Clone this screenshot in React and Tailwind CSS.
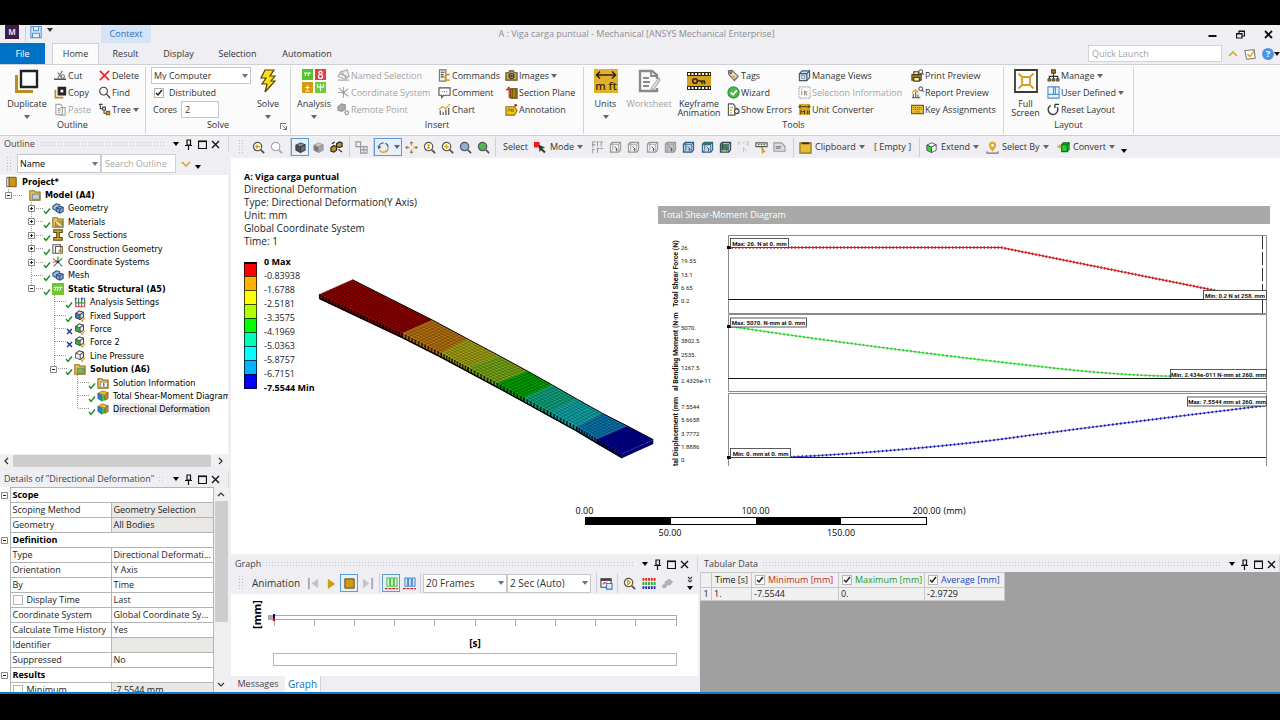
import { useState } from "react";
import clsx from "clsx";

const BANDS = ["#8e0000", "#b5720f", "#a3a312", "#78a818", "#00a000", "#0fa27c", "#10a3a3", "#0b74ab", "#00008c"];
const LEGEND = [
    ["bg-[#ff0000]", "-0.83938"],
    ["bg-[#ffb200]", "-1.6788"],
    ["bg-[#ffff00]", "-2.5181"],
    ["bg-[#b2ff00]", "-3.3575"],
    ["bg-[#00ff00]", "-4.1969"],
    ["bg-[#00ffb2]", "-5.0363"],
    ["bg-[#00ffff]", "-5.8757"],
    ["bg-[#00b2ff]", "-6.7151"],
    ["bg-[#0000ff]", "-7.5544 Min"],
];

/* ---------- small shared pieces ---------- */

function Svg({ size = "w-[13px] h-[13px]", box = "0 0 14 14", children }) {
    return (
        <svg viewBox={box} className={clsx("shrink-0", size)} fill="none" stroke="#444" strokeWidth="1.2">
            {children}
        </svg>
    );
}

function Arrow({ className = "text-gray-500" }) {
    return (
        <svg viewBox="0 0 6 4" className={clsx("w-[6px] h-[4px] shrink-0", className)}>
            <path d="M0 0h6L3 4z" fill="currentColor" />
        </svg>
    );
}

function Sep() {
    return <span className="w-px h-5 bg-[#cfcfd6] shrink-0" />;
}

function Grip() {
    return <span className="w-[6px] h-4 shrink-0 bg-[radial-gradient(#bcbcc2_1px,transparent_1px)] bg-[size:3px_3px]" />;
}

function Tick({ label, checked, className }) {
    const [on, setOn] = useState(checked);
    return (
        <label className={clsx("flex items-center whitespace-nowrap", className)}>
            <span className="relative flex shrink-0">
                <input
                    type="checkbox"
                    checked={on}
                    onChange={(e) => setOn(e.target.checked)}
                    className="appearance-none w-[10px] h-[10px] border border-[#b5b5b5] bg-white"
                />
                {on && (
                    <svg viewBox="0 0 10 10" className="absolute inset-0 w-[10px] h-[10px] pointer-events-none" fill="none" stroke="#222" strokeWidth="1.5">
                        <path d="M2 5l2 2 4-5" />
                    </svg>
                )}
            </span>
            {label}
        </label>
    );
}

function Picker({ label, options, className }) {
    return (
        <div className={clsx("relative shrink-0", className)}>
            <select aria-label={label} className="appearance-none w-full h-full border border-[#c6c6cc] bg-white pl-[2px] pr-3 leading-none">
                {options.map((o) => (
                    <option key={o}>{o}</option>
                ))}
            </select>
            <span className="absolute right-[3px] inset-y-0 flex items-center pointer-events-none">
                <Arrow />
            </span>
        </div>
    );
}

function PanelHeader({ title, edge = "pr-[6px]" }) {
    return (
        <div className={clsx("flex items-center h-4 shrink-0 pl-[4px] text-[#444] border-r border-[#d5d5da]", edge)}>
            <h2 className="whitespace-nowrap">{title}</h2>
            <span className="flex-1 h-[7px] mx-1 bg-[radial-gradient(#c4c4ca_1px,transparent_1px)] bg-[size:3px_3px]" />
            <button aria-label="Menu" className="w-[13px] flex justify-center"><Arrow className="text-black" /></button>
            <button aria-label="Pin" className="w-[13px] flex justify-center">
                <Svg size="w-[9px] h-[11px]" box="0 0 9 11"><path d="M3 1h3.500v5H3zM1 6.500h7M4.500 6.500V11" stroke="#111" /></Svg>
            </button>
            <button aria-label="Maximize" className="w-[14px] flex justify-center">
                <Svg size="w-[9px] h-[9px]" box="0 0 9 9"><path d="M.5 1h8v7.500h-8z" stroke="#111" /><path d="M0 1.500h9" stroke="#111" /></Svg>
            </button>
            <button aria-label="Close" className="w-[13px] flex justify-center">
                <Svg size="w-[9px] h-[9px]" box="0 0 9 9"><path d="M1 1l7 7M8 1L1 8" stroke="#111" strokeWidth="1.400" /></Svg>
            </button>
        </div>
    );
}

/* ---------- icons ---------- */

function Cube({ top = "#fff", left = "#fff", right = "#fff", stroke = "#444" }) {
    return (
        <Svg>
            <path d="M2 4.500L7 2l5 2-5 2.500z" fill={top} stroke={stroke} strokeWidth=".9" />
            <path d="M2 4.500l5 2v6l-5-2.500z" fill={left} stroke={stroke} strokeWidth=".9" />
            <path d="M12 4L7 6.500v6l5-2.500z" fill={right} stroke={stroke} strokeWidth=".9" />
        </Svg>
    );
}

function Mag({ fill = "#fff", stroke = "#555", mark }) {
    return (
        <Svg>
            <circle cx="6" cy="6" r="4.500" fill={fill} stroke={stroke} strokeWidth="1.300" />
            <path d="M9.500 9.500l3.500 3.500" stroke={stroke} strokeWidth="2" />
            {mark && <path d={mark} stroke="#d9a400" strokeWidth="1.400" />}
        </Svg>
    );
}

function SelBox({ fill = "#f4f4f4", stroke = "#999", cap }) {
    return (
        <Svg>
            <path d="M1.500 3.500l2-2h9v8l-2 2.500h-9z" fill={fill} stroke={stroke} />
            {cap && <path d={cap} fill="#2f8f3a" stroke="none" />}
            <path d="M1.500 3.500h9V12M10.500 3.500l2-2M4 1.500v8L1.500 12" stroke={stroke} strokeWidth=".9" />
            <path d="M6 6l3 3-1.500.2 1 2" stroke="#555" strokeWidth="1" />
        </Svg>
    );
}

const I = {
    cut: <Svg><path d="M0 11h13" strokeWidth="1.500" /><path d="M4 10l5-8M8 9L4 4" stroke="#777" /><circle cx="9.500" cy="8" r="1.800" stroke="#777" /></Svg>,
    copy: <Svg><path d="M4.500 1.500h8v8h-8z" fill="#222" stroke="#222" /><path d="M7 4h3v3H7z" fill="#fff" stroke="none" /><path d="M1.500 4v8.500H10" stroke="#b8901c" strokeWidth="1.800" /></Svg>,
    paste: <Svg><path d="M2 1.500h5l2 2v9H2zM7 5h5v8H6" stroke="#a6a6a6" /><path d="M4 6h3M4 8h3M4 10h3" stroke="#a6a6a6" /></Svg>,
    del: <Svg><path d="M2 2l10 10M12 2L2 12" stroke="#e3262b" strokeWidth="1.700" /></Svg>,
    find: <Svg><circle cx="6" cy="5.500" r="4.200" stroke="#444" /><path d="M9 8.500l4 4.500" stroke="#444" strokeWidth="1.500" /></Svg>,
    tree: <Svg><path d="M1 1.500h4M2.500 1.500v4.500h4M6.500 6v5h3" stroke="#444" /><path d="M5 4.500h3v3H5z" fill="#fff" /><path d="M9 9h3.500v3.500H9z" fill="#c9a227" stroke="#7c6413" /></Svg>,
    named: <Svg><path d="M1 8l3-5 7-2 2 7-4 3z" stroke="#aaa" fill="#eee" /><path d="M3 5l8 3M5 3l5 7M1 12h12" stroke="#aaa" /></Svg>,
    coord: <Svg><path d="M7 7L2 2M7 7l5-4M7 7v6M7 7H1M7 7l5 4M7 7V1" stroke="#aaa" /><circle cx="7" cy="7" r="1.500" fill="#999" stroke="none" /></Svg>,
    remote: <Svg><path d="M1 4l4-3 4 1v5L5 9 1 8z" fill="#aaa" stroke="#999" /><circle cx="10.500" cy="10.500" r="2" stroke="#999" /></Svg>,
    commands: <Svg><path d="M1.500 1h7v12h-7z" fill="#eee" stroke="#777" /><path d="M3 3.500h4M3 6h3M3 8.500h3" stroke="#444" /><path d="M12.500 6.500a3 3 0 1 0 0 5" stroke="#d39e00" strokeWidth="1.800" /></Svg>,
    comment: <Svg><path d="M1 2h12v8H6l-2 2.500V10H1z" fill="#fff" stroke="#555" /><path d="M4 6h1M6.500 6h1M9 6h1" stroke="#777" /></Svg>,
    chart: <Svg><path d="M2.500 8v5M5.500 10v3M8.500 7v6M11.500 5v8" stroke="#666" strokeWidth="1.500" /><path d="M1 7l4-3 3 2 5-5" stroke="#d9a400" /></Svg>,
    images: <Svg><path d="M1 4h3l1-2h4l1 2h3v8H1z" fill="#c7a94c" stroke="#5c4d1c" /><circle cx="7" cy="7.500" r="2.600" fill="#fff" stroke="#222" /><circle cx="7" cy="7.500" r="1" fill="#222" /></Svg>,
    section: <Svg><path d="M6 3h7v10H6z" fill="#b88a14" stroke="#5d4507" /><path d="M8 3v10M11 3v10" stroke="#5d4507" strokeWidth=".8" /><path d="M4.500 1v12M1 4h6M4.500 1L2.500 3" stroke="#e02020" strokeWidth="1.300" /></Svg>,
    annotation: <Svg><path d="M1 4h9l3 4-3 5H1z" fill="#f0c51c" stroke="#8d7306" /><path d="M3 9l1.500-3L6 9M7 6v3h2V7H7" stroke="#6b5806" strokeWidth=".8" /><circle cx="11.500" cy="2.500" r="1.500" fill="#e02020" stroke="none" /></Svg>,
    tags: <Svg><path d="M1.500 2l4-.5L12 8l-4 4.500L2 6z" fill="#e9dfbf" stroke="#666" /><circle cx="4" cy="4" r="1" fill="#fff" stroke="#555" /><path d="M6 7l3 3" stroke="#b5942c" /></Svg>,
    wizard: <Svg><circle cx="7" cy="7" r="6" fill="#4fb84a" stroke="#2c8f35" /><path d="M4 7l2.500 2.500L10.500 4.500" stroke="#fff" strokeWidth="1.800" /></Svg>,
    errors: <Svg><path d="M1.500 1h5l2 2v10h-7z" fill="#fff" stroke="#555" /><path d="M3.500 5h3M3.500 8h2M3.500 10.500h2" stroke="#d9a400" /><circle cx="10.500" cy="9" r="2.500" fill="#eee" stroke="#444" /><path d="M9 5l3 1.500" /></Svg>,
    views: <Svg><path d="M1.500 5l3-3h8v7l-3 3.500h-8z" fill="#cfe2f5" stroke="#456" /><path d="M1.500 5h8v7.500M9.500 5l3-3" stroke="#456" /><path d="M4 7h3v3H4z" fill="#fff" stroke="#678" strokeWidth=".8" /></Svg>,
    info: <Svg><path d="M1 1h12v12H1z" stroke="#aaa" strokeDasharray="2 1" /><path d="M4 5v5M4 3v1M7 10V6l3 4M10 6H8" stroke="#999" /></Svg>,
    converter: <Svg><path d="M1 1h12v12H1z" fill="#e0aa24" stroke="none" /><path d="M1 4h12M3 2L1 4l2 2M11 2l2 2-2 2M3 12V8l2 2 2-2v4M10 12V8M12 12V8" stroke="#3a2d05" strokeWidth="1" /></Svg>,
    print: <Svg><path d="M1 6h10v6H1z" fill="#b59432" stroke="#4b3d0f" /><path d="M3 3h5v3H3zM3 9h6v4H3z" fill="#f8eec5" stroke="#4b3d0f" /><circle cx="10.500" cy="3" r="2" stroke="#667" fill="#fff" /><path d="M12 4.500l1.500 1.500" /></Svg>,
    report: <Svg><path d="M1 12.500h9M2.500 8v4M5 6v6M7.500 9v3" stroke="#666" strokeWidth="1.300" /><path d="M1 7l4-3 3 3" stroke="#e09a20" /><circle cx="10.500" cy="3" r="2" stroke="#667" fill="#fff" /><path d="M12 4.500l1.500 1.500" /></Svg>,
    keys: <Svg><path d="M.5 2.500h13v9H.5z" fill="#eec436" stroke="#7e6205" strokeWidth="1.400" /><path d="M2.500 5h9M2.500 7h9M4 9.500h6" stroke="#8d7110" strokeDasharray="1.200 .8" /></Svg>,
    manage: <Svg><path d="M7 4v4M2.500 11V8h9v3M7 8v3" stroke="#333" /><path d="M5 1h4v3.500H5z" fill="#a5811c" stroke="#5d4507" /><path d="M1 10.500h3V13H1zM5.500 10.500h3V13h-3zM10 10.500h3V13h-3z" fill="#a5811c" stroke="#333" strokeWidth=".8" /></Svg>,
    user: <Svg><path d="M1 1h12v12H1zM7 1v8M1 9h12M9 9V1" fill="#eaf3fc" stroke="#4c90cf" /></Svg>,
    reset: <Svg><path d="M4 2.500A5.200 5.200 0 1 0 11 4.500" strokeWidth="1.600" /><path d="M8.500 1.500H13M8.500 1.500v4" stroke="#333" strokeWidth="1.400" /></Svg>,
};

const Big = {
    duplicate: <Svg size="w-6 h-6" box="0 0 24 24"><path d="M1.500 6v16.500H18" stroke="#b8901c" strokeWidth="3" /><path d="M6 2h16v16H6z" fill="#fff" stroke="#222" strokeWidth="2.400" /></Svg>,
    solve: <Svg size="w-6 h-6" box="0 0 24 24"><path d="M9 1h9l-4 6h5l-4 5h4L9 23l2-8H6l4-6H5z" fill="#ffdd11" stroke="#4e4508" /></Svg>,
    analysis: (
        <Svg size="w-6 h-6" box="0 0 24 24">
            <path d="M0 0h11v11H0z" fill="#55c52c" stroke="none" /><path d="M13 0h11v11H13z" fill="#e04143" stroke="none" />
            <path d="M0 13h11v11H0z" fill="#d49b12" stroke="none" /><path d="M13 13h11v11H13z" fill="#69cf35" stroke="none" />
            <path d="M2 4h7M3 7l1-3M6 7l1-3M3.500 18.500h4M5.500 16.500v4M3.500 22h4M15.500 15v3h6v-3M18.500 15v7" stroke="#fff" />
            <circle cx="18.500" cy="3.700" r="1.600" stroke="#fff" /><circle cx="18.500" cy="7.500" r="2" stroke="#fff" />
        </Svg>
    ),
    units: (
        <Svg size="w-6 h-6" box="0 0 24 24">
            <path d="M0 0h24v24H0z" fill="#e2b02c" stroke="none" />
            <path d="M3 6h18M6 2.500L2.500 6 6 9.500M18 2.500L21.500 6 18 9.500" stroke="#2b2410" strokeWidth="1.600" />
            <text x="12" y="21" textAnchor="middle" fontSize="11" fontWeight="600" fill="#3a2d05" stroke="none">m ft</text>
        </Svg>
    ),
    worksheet: <Svg size="w-6 h-6" box="0 0 24 24"><path d="M20 10V6l-5-4H3v20h17v-3" stroke="#8a8a8a" strokeWidth="2.400" /><path d="M14 2v5h6M6 9h6M6 13h7M6 17h6" stroke="#8a8a8a" strokeWidth="1.800" /><path d="M22 9l-7 9-1 3 3-1 6-9z" fill="#eee" stroke="#aaa" /></Svg>,
    keyframe: (
        <Svg size="w-6 h-6" box="0 0 24 24">
            <path d="M0 3h24v18H0z" fill="#2e2710" stroke="none" /><path d="M0 7h24v10H0z" fill="#d6a11d" stroke="none" />
            <path d="M1 5h22M1 19h22" stroke="#fff" strokeWidth="1.800" strokeDasharray="2 1.500" />
            <circle cx="8" cy="12" r="2.300" stroke="#2e2710" strokeWidth="1.600" /><path d="M10 12h8M15 12v3M17.500 12v3" stroke="#2e2710" strokeWidth="1.600" />
        </Svg>
    ),
    full: <Svg size="w-6 h-6" box="0 0 24 24"><path d="M1 1h22v22H1z" fill="#fff" stroke="#3a3a3a" strokeWidth="1.800" /><path d="M8 8h8v8H8zM8 8L4.500 4.500M16 8l3.500-3.500M8 16l-3.500 3.500M16 16l3.500 3.500" stroke="#d9a11a" strokeWidth="1.800" /></Svg>,
};

/* ---------- ribbon ---------- */

function Cmd({ icon, label, off, arrow }) {
    return (
        <button disabled={off} className={clsx("flex items-center h-[17px] gap-px whitespace-nowrap", off ? "text-[#a3a3a3]" : "text-[#333]")}>
            {icon}
            <span>{label}</span>
            {arrow && <Arrow className="ml-px text-[#666]" />}
        </button>
    );
}

function BigCmd({ icon, label, second, off, arrow, width }) {
    return (
        <button disabled={off} className={clsx("flex flex-col items-center pt-[2px] shrink-0 leading-[9px] whitespace-nowrap", width, off ? "text-[#a3a3a3]" : "text-[#333]")}>
            {icon}
            <span className="mt-[6px]">{label}</span>
            {second && <span>{second}</span>}
            {arrow && <Arrow className="mt-[7px] text-[#666]" />}
        </button>
    );
}

function Group({ title, width, children, launcher }) {
    return (
        <section className={clsx("relative flex flex-col shrink-0 h-[67px] border-r border-[#d2d2d8]", width)}>
            <div className="flex h-[51px]">{children}</div>
            <h3 className="text-center leading-[13px]">{title}</h3>
            {launcher && (
                <button aria-label="Solve options" className="absolute right-[3px] bottom-1">
                    <Svg size="w-[7px] h-[7px]" box="0 0 7 7"><path d="M.5 6V.5H6M2.500 2.500l4 4M6.500 3v3.500H3" stroke="#666" strokeWidth=".9" /></Svg>
                </button>
            )}
        </section>
    );
}

function Col({ width, children }) {
    return <div className={clsx("flex flex-col shrink-0", width)}>{children}</div>;
}

function Ribbon() {
    return (
        <div className="flex h-[72px] pt-[2px] bg-[#fbfbfc] border-y border-[#cfcfd6] shrink-0 text-[#333]">
            <Group title="Outline" width="w-[146px]">
                <BigCmd icon={Big.duplicate} label="Duplicate" arrow width="w-[54px]" />
                <Col width="w-11">
                    <Cmd icon={I.cut} label="Cut" />
                    <Cmd icon={I.copy} label="Copy" />
                    <Cmd icon={I.paste} label="Paste" off />
                </Col>
                <Col>
                    <Cmd icon={I.del} label="Delete" />
                    <Cmd icon={I.find} label="Find" />
                    <Cmd icon={I.tree} label="Tree" arrow />
                </Col>
            </Group>
            <Group title="Solve" width="w-[145px]" launcher>
                <div className="flex flex-col pl-[5px] w-[106px]">
                    <Picker label="Solve target" options={["My Computer"]} className="w-[100px] h-[17px]" />
                    <Tick label="Distributed" checked className="gap-[5px] pl-[3px] h-[17px]" />
                    <label className="flex items-center h-[17px] pl-[2px] gap-1">
                        Cores
                        <input defaultValue="2" className="w-[38px] h-[17px] border border-[#c6c6cc] bg-white px-[3px]" />
                    </label>
                </div>
                <BigCmd icon={Big.solve} label="Solve" arrow width="w-8" />
            </Group>
            <Group title="Insert" width="w-[293px]">
                <BigCmd icon={Big.analysis} label="Analysis" arrow width="w-[46px]" />
                <Col width="w-[101px]">
                    <Cmd icon={I.named} label="Named Selection" off />
                    <Cmd icon={I.coord} label="Coordinate System" off />
                    <Cmd icon={I.remote} label="Remote Point" off />
                </Col>
                <Col width="w-[67px]">
                    <Cmd icon={I.commands} label="Commands" />
                    <Cmd icon={I.comment} label="Comment" />
                    <Cmd icon={I.chart} label="Chart" />
                </Col>
                <Col>
                    <Cmd icon={I.images} label="Images" arrow />
                    <Cmd icon={I.section} label="Section Plane" />
                    <Cmd icon={I.annotation} label="Annotation" />
                </Col>
            </Group>
            <Group title="Tools" width="w-[420px]">
                <BigCmd icon={Big.units} label="Units" arrow width="w-[43px]" />
                <BigCmd icon={Big.worksheet} label="Worksheet" off width="w-11" />
                <BigCmd icon={Big.keyframe} label="Keyframe" second="Animation" width="w-[56px]" />
                <Col width="w-[71px]">
                    <Cmd icon={I.tags} label="Tags" />
                    <Cmd icon={I.wizard} label="Wizard" />
                    <Cmd icon={I.errors} label="Show Errors" />
                </Col>
                <Col width="w-[113px]">
                    <Cmd icon={I.views} label="Manage Views" />
                    <Cmd icon={I.info} label="Selection Information" off />
                    <Cmd icon={I.converter} label="Unit Converter" />
                </Col>
                <Col>
                    <Cmd icon={I.print} label="Print Preview" />
                    <Cmd icon={I.report} label="Report Preview" />
                    <Cmd icon={I.keys} label="Key Assignments" />
                </Col>
            </Group>
            <Group title="Layout" width="w-[130px]">
                <BigCmd icon={Big.full} label="Full" second="Screen" width="w-[43px]" />
                <Col>
                    <Cmd icon={I.manage} label="Manage" arrow />
                    <Cmd icon={I.user} label="User Defined" arrow />
                    <Cmd icon={I.reset} label="Reset Layout" />
                </Col>
            </Group>
        </div>
    );
}

function TitleBar() {
    return (
        <header className="shrink-0 bg-[#efeef3]">
            <div className="flex items-center h-[18px]">
                <div className="flex items-center flex-1 h-full">
                    <svg viewBox="0 0 14 14" className="w-[14px] h-[14px] ml-[5px] mb-1">
                        <path d="M0 0h14v14H0z" fill="#3b1d4a" />
                        <text x="7" y="10" textAnchor="middle" fontSize="8" fontWeight="bold" fill="#e6dcea">M</text>
                    </svg>
                    <span className="w-px h-4 ml-[6px] bg-[#cfcfd6]" />
                    <button aria-label="Save" className="ml-[4px] mb-1">
                        <Svg size="w-[12px] h-[13px]"><path d="M1 0h12v13H1zM4 0v5h6V0M3 13V8h8v5" fill="#e2effb" stroke="#4c90cf" /></Svg>
                    </button>
                    <button aria-label="Customize" className="ml-[5px] mb-2"><Arrow className="text-[#333]" /></button>
                    <div className="flex items-center justify-center w-[50px] h-full ml-[48px] bg-[#d5e3f6] text-[#2c6fba]">Context</div>
                </div>
                <h1 className="text-[#8d8d92]">A : Viga carga puntual - Mechanical [ANSYS Mechanical Enterprise]</h1>
                <div className="flex items-center justify-end flex-1 gap-[19px] pr-[7px]">
                    <button aria-label="Minimize"><Svg size="w-[9px] h-[9px]" box="0 0 9 9"><path d="M.5 6h8" stroke="#111" strokeWidth="2" /></Svg></button>
                    <button aria-label="Restore"><Svg size="w-[9px] h-[9px]" box="0 0 9 9"><path d="M3 3V1h5.500v5H6M.5 3.500H6V8H.5z" stroke="#111" /><path d="M.5 4H6M3 1.500h5.500" stroke="#111" /></Svg></button>
                    <button aria-label="Close"><Svg size="w-[9px] h-[9px]" box="0 0 9 9"><path d="M1 1l7 7M8 1L1 8" stroke="#111" strokeWidth="1.800" /></Svg></button>
                </div>
            </div>
            <nav className="flex items-center h-[21px] text-[#333]">
                <button className="w-[45px] h-full bg-[#0072c6] text-white">File</button>
                <button className="w-[47px] h-[22px] ml-[7px] bg-[#fbfbfc] border border-b-0 border-[#cfcfd6]">Home</button>
                <button className="w-[53px]">Result</button>
                <button className="w-[53px]">Display</button>
                <button className="w-[65px]">Selection</button>
                <button className="w-[74px]">Automation</button>
                <div className="flex items-center flex-1 justify-end gap-[6px]">
                    <input aria-label="Quick Launch" placeholder="Quick Launch" className="w-[134px] h-[17px] border border-[#d2d2d8] bg-white px-[3px] placeholder:text-[#a3a3a3]" />
                    <Svg size="w-[10px] h-[8px]" box="0 0 10 8"><path d="M1 6l4-4 4 4" stroke="#d9a11a" strokeWidth="1.500" /></Svg>
                    <Svg size="w-[12px] h-[12px]"><path d="M1 3l11-1 1 10-10 1z" fill="#fff" stroke="#777" /><path d="M4 7l3 3 5-7" stroke="#d9a11a" strokeWidth="1.600" /></Svg>
                    <button aria-label="Help" className="flex items-center">
                        <svg viewBox="0 0 14 14" className="w-[12px] h-[12px]">
                            <circle cx="7" cy="7" r="7" fill="#4a94e6" />
                            <text x="7" y="11" textAnchor="middle" fontSize="11" fontWeight="bold" fill="#fff">?</text>
                        </svg>
                        <Arrow className="text-[#111]" />
                    </button>
                </div>
            </nav>
        </header>
    );
}

/* ---------- graphics toolbar ---------- */

function Tool({ label, children, active, width = "w-[18px]" }) {
    return (
        <button
            aria-label={label}
            className={clsx("flex items-center justify-center gap-1 h-[18px] shrink-0", width, active && "border border-[#5b9bd8] bg-[#e6effa]")}
        >
            {children}
        </button>
    );
}

function ToolText({ icon, label, width }) {
    return (
        <button className={clsx("flex items-center shrink-0 gap-[3px] whitespace-nowrap", width)}>
            {icon}
            {label}
            <Arrow className="text-[#666]" />
        </button>
    );
}

function ViewToolbar() {
    return (
        <div className="flex items-center h-[22px] shrink-0 bg-[#efeef3] text-[#333] pl-[7px] overflow-hidden">
            <Grip />
            <span className="w-[5px] shrink-0" />
            <Tool label="Previous view"><Mag mark="M4 6h5M6 4L4 6l2 2" /></Tool>
            <Tool label="Next view"><Mag stroke="#aaa" /></Tool>
            <span className="w-[5px] shrink-0" />
            <Sep />
            <Tool label="Shaded" active><Cube top="#8c8c8c" left="#4d4d4d" right="#6b6b6b" stroke="#333" /></Tool>
            <Tool label="Solid"><Cube top="#c9c9c9" left="#777" right="#a3a3a3" stroke="#999" /></Tool>
            <Tool label="Show mesh"><Svg><path d="M1 7l3-2 3 1v4l-3 2-3-1zM7 3l3-2 3 1v4l-3 1-3-1z" fill="#b8962e" stroke="#222" /><path d="M9 9l4 3M2 3l3-2" stroke="#222" /></Svg></Tool>
            <span className="w-[4px] shrink-0" />
            <Sep />
            <Tool label="Explode" width="w-[23px]"><Svg><path d="M1 1h5v5H1zM6 6h7v7H6zM6 9.500h7M9.500 6v7" stroke="#999" /></Svg></Tool>
            <Sep />
            <Tool label="Rotate" active width="w-7">
                <Svg><path d="M2 7a5 5 0 0 1 5-5M9 2.500A5 5 0 0 1 12 7" stroke="#555" /><path d="M12 8a5 5 0 0 1-9 2" stroke="#d9a11a" strokeWidth="1.500" /><path d="M1 5l1 3 2-2" stroke="#555" /></Svg>
                <Arrow className="text-[#666]" />
            </Tool>
            <Tool label="Pan"><Svg><path d="M7 1v4M7 9v4M1 7h4M9 7h4" stroke="#d9a11a" strokeWidth="1.600" /><path d="M5.500 2.500L7 1l1.500 1.500M5.500 11.500L7 13l1.500-1.500M2.500 5.500L1 7l1.500 1.500M11.500 5.500L13 7l-1.500 1.500" stroke="#333" strokeWidth=".9" /></Svg></Tool>
            <Tool label="Zoom"><Mag mark="M6 3.500v5M4.500 4.500h3M4.500 7.500h3" /></Tool>
            <Tool label="Zoom in"><Mag mark="M6 3.500v5M3.500 6h5" /></Tool>
            <Tool label="Zoom fit"><Mag fill="#8fb2cf" /></Tool>
            <Tool label="Zoom selection"><Mag fill="#57b357" /></Tool>
            <span className="w-[3px] shrink-0" />
            <Sep />
            <span className="w-[38px] pl-[7px] shrink-0">Select</span>
            <ToolText
                width="w-[54px]"
                label="Mode"
                icon={<Svg><path d="M0 1h6v6H0z" fill="#f01818" stroke="none" /><path d="M5 4l7 3-3 1.200 3.500 3.500-1.500 1.500-3.500-3.500L6 12z" fill="#333" stroke="none" /></Svg>}
            />
            <Tool label="Filter"><Svg><path d="M1 1h4M1 4h4M2 1v6M6 1h3M7 1v5M10 1h3M11 1v5M1 9h3M2 9v4M6 8h3M7 8v5M10 8h3" stroke="#888" strokeWidth=".9" /></Svg></Tool>
            <Tool label="Vertex"><SelBox /></Tool>
            <Tool label="Edge" width="w-[19px]"><SelBox /></Tool>
            <Tool label="Face"><SelBox /></Tool>
            <Tool label="Body"><SelBox fill="#c2c2c2" /></Tool>
            <Tool label="Node" width="w-[19px]"><SelBox fill="#b9d3ea" stroke="#2f5f85" /></Tool>
            <Tool label="Element face"><SelBox fill="#cfe0ee" stroke="#2f5f85" cap="M2 3.500l2-2h8l-2 3H2z" /></Tool>
            <Tool label="Element"><SelBox fill="#cfe0ee" stroke="#345" cap="M2 4h8v6H2z" /></Tool>
            <Tool label="Coordinates"><Svg><path d="M1 1l2 3M3 1L1 4M6 1l1 1.500L8 1M10 1h3l-3 3h3M7 7l3 4M7 7v5" stroke="#bbb" strokeWidth=".9" /></Svg></Tool>
            <Tool label="Label"><Svg><path d="M1 2h12v4H1z" fill="#fff" stroke="#555" /><path d="M3 4h8" strokeDasharray="2 1" /><path d="M7 6l4 6-2-.5-1 2z" fill="#e7b524" stroke="#b78b0e" strokeWidth=".7" /></Svg></Tool>
            <Tool label="Tag"><Svg><path d="M1 2h8l4 4v5H1z" fill="#ddd" stroke="#999" /><path d="M3 6h6M3 8h5" stroke="#888" /></Svg></Tool>
            <span className="w-[5px] shrink-0" />
            <Sep />
            <ToolText width="w-[80px] pl-[5px]" label="Clipboard" icon={<Svg><path d="M1 2h12v11H1z" fill="#e8bb36" stroke="#8d6d0c" /><path d="M3 2.500h8" stroke="#333" strokeWidth="2" /></Svg>} />
            <span className="w-[45px] whitespace-nowrap shrink-0">[ Empty ]</span>
            <Sep />
            <ToolText width="w-[66px] pl-[5px]" label="Extend" icon={<Cube top="#fff" left="#37d048" right="#fff" />} />
            <ToolText width="w-[71px]" label="Select By" icon={<Svg><path d="M7 11C4 7 3.500 6 3.500 4.500a3.500 3.500 0 0 1 7 0C10.500 6 10 7 7 11z" fill="#e3b02b" stroke="#c18f12" strokeWidth=".6" /><circle cx="7" cy="4.500" r="1.300" fill="#fff" stroke="none" /><path d="M1 11v2h12v-2" stroke="#777" /></Svg>} />
            <ToolText width="w-[64px]" label="Convert" icon={<Svg><path d="M5 4l2-2h6v7l-2 2.500H5z" fill="#1fd02f" stroke="#0b6d15" /><path d="M5 4h6v7.500M11 4l2-2" stroke="#0b6d15" /><path d="M0 6h4M2.500 4L4.500 6l-2 2" stroke="#d9a11a" /></Svg>} />
            <button aria-label="More tools" className="pt-2"><Arrow className="text-black" /></button>
        </div>
    );
}

/* ---------- outline tree ---------- */

const folder = (fill, inner) => (
    <Svg size="w-[12px] h-[12px]"><path d="M1 2h5l1 1.500h6V13H1z" fill="#e8c65a" stroke="#8a6d14" /><path d="M4 6h8v6H4z" fill={fill} stroke="#666" strokeWidth=".8" />{inner}</Svg>
);
const blocks = (
    <Svg size="w-[12px] h-[12px]"><path d="M1 5l4-3 4 1v5L5 10 1 8z" fill="#9dbce0" stroke="#33507a" /><path d="M5 7l4-2 4 1v5l-4 2-4-2z" fill="#7fa6d4" stroke="#33507a" /><path d="M5 7l4 1.500L13 6M9 8.500V13" stroke="#33507a" /></Svg>
);
const rainbow = (
    <Svg size="w-[12px] h-[12px]"><path d="M1 4l5-3 7 2-4 3z" fill="#f0b91a" stroke="#555" strokeWidth=".6" /><path d="M1 4l5 2v7l-5-3z" fill="#2b7fe0" stroke="#335" strokeWidth=".6" /><path d="M6 6l3.500 0v6L6 13z" fill="#31c43e" stroke="none" /><path d="M9.500 6L13 3v7l-3.500 2z" fill="#f07a20" stroke="#532" strokeWidth=".6" /></Svg>
);
const load = (top, left) => (
    <Svg size="w-[12px] h-[12px]"><path d="M2 4l4-3 5 1.500v6L7 11 2 9z" fill={top} stroke="#444" /><path d="M2 4l5 1.500L11 2.500M7 5.500V11" stroke="#444" /><path d="M2 4l5 1.500V11L2 9z" fill={left} stroke="#444" strokeWidth=".6" /><path d="M13 9l-4 4M9 11v2h2" stroke="#d9a11a" /></Svg>
);

const TREE = [
    { name: "Model (A4)", level: 1, bold: true, box: "-", icon: folder("#b9d3ea") },
    { name: "Geometry", level: 2, box: "+", mark: "ok", icon: blocks },
    { name: "Materials", level: 2, box: "+", mark: "ok", icon: folder("#caa13a", <path d="M4 6l7 6" stroke="#fff" />) },
    { name: "Cross Sections", level: 2, box: "+", mark: "ok", icon: <Svg size="w-[12px] h-[12px]"><path d="M2 1h10v3H8.500v6H12v3H2v-3h3.500V4H2z" fill="#cba032" stroke="#5f480b" /></Svg> },
    { name: "Construction Geometry", level: 2, box: "+", mark: "ok", icon: <Svg size="w-[12px] h-[12px]"><path d="M1 2h9v10H1zM4 4h8v8H4z" fill="#fff" stroke="#555" /><path d="M11 5l-3 5h3l-2 3" stroke="#d9a11a" /></Svg> },
    { name: "Coordinate Systems", level: 2, box: "+", mark: "ok", icon: <Svg size="w-[12px] h-[12px]"><path d="M7 7L1 3M7 7H1" stroke="#d33" /><path d="M7 7V1M7 7l5-4" stroke="#27a53a" strokeWidth="1.600" /><path d="M7 7l5 5M7 7l-5 5" stroke="#27a" /><circle cx="7" cy="7" r="1.500" fill="#333" stroke="none" /></Svg> },
    { name: "Mesh", level: 2, mark: "ok", icon: blocks },
    { name: "Static Structural (A5)", level: 2, bold: true, box: "-", mark: "ok", icon: <Svg size="w-[12px] h-[12px]"><path d="M0 0h14v14H0z" fill="#6cc531" stroke="none" /><path d="M2 5h10M3 9l1.500-4M6 9l1.500-4M9 9l1.500-4" stroke="#fff" /></Svg> },
    { name: "Analysis Settings", level: 3, mark: "ok", icon: <Svg size="w-[12px] h-[12px]"><path d="M2 2v10M5.500 2v10M9 2v10M12.500 2v10" stroke="#555" /><path d="M1 3h2M8 3h3" stroke="#44d" strokeWidth="2" /><path d="M1 8h12" stroke="#3a3" strokeWidth="1.500" /><path d="M1 12.500h12" stroke="#d33" /></Svg> },
    { name: "Fixed Support", level: 3, mark: "ok", icon: load("#cfe0ef", "#3f78b5") },
    { name: "Force", level: 3, mark: "off", icon: load("#fff", "#2fb543") },
    { name: "Force 2", level: 3, mark: "off", icon: load("#fff", "#2fb543") },
    { name: "Line Pressure", level: 3, mark: "ok", icon: load("#fff", "#eef5ee") },
    { name: "Solution (A6)", level: 3, bold: true, box: "-", mark: "ok", icon: folder("#79b65a") },
    { name: "Solution Information", level: 4, mark: "ok", icon: folder("#fff", <path d="M8 7v4" stroke="#333" />) },
    { name: "Total Shear-Moment Diagram", level: 4, mark: "ok", icon: rainbow },
    { name: "Directional Deformation", level: 4, mark: "ok", icon: rainbow, selected: true },
];
const INDENT = { 1: "pl-[4px]", 2: "pl-[27px]", 3: "pl-[49px]", 4: "pl-[72px]" };

function Expander({ sign }) {
    return (
        <svg viewBox="0 0 9 9" className="w-[9px] h-[9px] shrink-0" fill="none" stroke="#222">
            <path d="M1.500 1.500h6v6h-6z" fill="#fff" stroke="#888" />
            <path d={sign === "+" ? "M3 4.500h3M4.500 3v3" : "M3 4.500h3"} />
        </svg>
    );
}

function TreeRow({ item }) {
    return (
        <li className={clsx("flex items-center whitespace-nowrap", INDENT[item.level], item.bold && "font-bold")}>
            <span className="flex items-center w-[41px] shrink-0">
                <span className="w-[9px] h-[9px] flex shrink-0">{item.box && <Expander sign={item.box} />}</span>
                <span className="w-[6px] shrink-0" />
                <svg viewBox="0 0 10 10" className="w-[10px] h-[10px] mt-1 shrink-0" fill="none" strokeWidth="1.400">
                    {item.mark === "ok" && <path d="M2 6l2 2.500 4-5" stroke="#178a1d" />}
                    {item.mark === "off" && <path d="M3 3l5 5M8 3L3 8" stroke="#1c2ea0" />}
                </svg>
                {item.icon}
            </span>
            <span className={clsx("leading-[12px]", item.selected && "bg-[#ececec]")}>{item.name}</span>
        </li>
    );
}

function Outline() {
    return (
        <section className="flex flex-col h-[333px] pb-[2px] shrink-0">
            <PanelHeader title="Outline" />
            <div className="flex items-center h-[23px] pl-[6px] shrink-0">
                <Grip />
                <Picker label="Filter by" options={["Name"]} className="w-[84px] h-[19px] ml-[5px]" />
                <input aria-label="Search Outline" placeholder="Search Outline" className="w-[75px] h-[19px] border border-[#d0d0d6] bg-white px-[3px] placeholder:text-[#a8a8a8]" />
                <Svg size="w-[10px] h-[8px] ml-[5px]" box="0 0 10 8"><path d="M1 2l4 4 4-4" stroke="#d9a11a" strokeWidth="1.500" /></Svg>
                <span className="pt-[7px] pl-[4px]"><Arrow className="text-black" /></span>
            </div>
            <div className="relative flex-1 mr-px overflow-hidden bg-white font-['DejaVu_Sans_Condensed','DejaVu_Sans',sans-serif] text-black">
                <svg className="absolute left-0 top-0 w-[120px] h-[240px]" stroke="#999" strokeDasharray="1 1" fill="none" shapeRendering="crispEdges">
                    <path d="M8.500 14v6M13 20.500h9M31.500 27v86M36 33.500h8M36 46.500h8M36 60.500h8M36 73.500h8M36 87.500h8M32 100.500h12M36 113.500h8" />
                    <path d="M54.500 120v74M55 126.500h12M55 140.500h12M55 153.500h12M55 166.500h12M55 180.500h12M58 193.500h9" />
                    <path d="M77.500 200v34M78 207.500h12M78 220.500h12M78 233.500h12" />
                </svg>
                <ul className="relative grid auto-rows-fr h-[241px]">
                    <li className="flex items-center gap-[5px] pl-[6px] font-bold">
                        <Svg size="w-[11px] h-[12px]"><path d="M1 1h3v12H1z" fill="#fff" stroke="#555" /><path d="M4 1h9v12H4z" fill="#c9951b" stroke="#6d500a" /></Svg>
                        Project*
                    </li>
                    {TREE.map((item) => (
                        <TreeRow key={item.name} item={item} />
                    ))}
                </ul>
            </div>
            <div className="flex items-center justify-between h-[13px] pl-[3px] pr-[5px] shrink-0 bg-[#f0f0f0]">
                <Svg size="w-[6px] h-[8px]" box="0 0 6 8"><path d="M5 1L2 4l3 3" stroke="#333" /></Svg>
                <span className="flex-1 h-[12px] ml-1 mr-[7px] bg-[#cdcdcd]" />
                <Svg size="w-[6px] h-[8px]" box="0 0 6 8"><path d="M1 1l3 3-3 3" stroke="#333" /></Svg>
            </div>
        </section>
    );
}

/* ---------- details ---------- */

const DETAILS = [
    { head: "Scope" },
    { name: "Scoping Method", value: "Geometry Selection", grey: true },
    { name: "Geometry", value: "All Bodies", grey: true },
    { head: "Definition" },
    { name: "Type", value: "Directional Deformati..." },
    { name: "Orientation", value: "Y Axis" },
    { name: "By", value: "Time" },
    { name: "Display Time", value: "Last", tick: true },
    { name: "Coordinate System", value: "Global Coordinate Sy..." },
    { name: "Calculate Time History", value: "Yes" },
    { name: "Identifier", value: "", grey: true },
    { name: "Suppressed", value: "No" },
    { head: "Results" },
    { name: "Minimum", value: "-7.5544 mm", grey: true, tick: true },
];

function Details() {
    return (
        <section className="flex flex-col flex-1 min-h-0 mt-[2px]">
            <PanelHeader title={'Details of "Directional Deformation"'} />
            <div className="flex flex-1 min-h-0 overflow-hidden bg-white mr-px">
                <div className="flex-1 min-w-0">
                    <table className="w-full table-fixed border-collapse text-[#222]">
                        <colgroup>
                            <col className="w-[10px]" />
                            <col className="w-[101px]" />
                            <col />
                        </colgroup>
                        <tbody>
                            {DETAILS.map((row) =>
                                row.head ? (
                                    <tr key={row.head} className="h-[15px]">
                                        <td className="p-0"><Expander sign="-" /></td>
                                        <th colSpan={2} className="border border-[#b4b4b4] p-0 pl-[2px] text-left font-bold text-black leading-[14px]">{row.head}</th>
                                    </tr>
                                ) : (
                                    <tr key={row.name} className="h-[15px]">
                                        <td className="p-0" />
                                        <td className="border border-[#b4b4b4] p-0 pl-[2px] leading-[14px] whitespace-nowrap overflow-hidden">
                                            {row.tick ? <Tick label={row.name} checked={false} className="gap-1" /> : row.name}
                                        </td>
                                        <td className={clsx("border border-[#b4b4b4] p-0 pl-[2px] leading-[14px] truncate", row.grey && "bg-[#e9e8e5]")}>{row.value}</td>
                                    </tr>
                                )
                            )}
                        </tbody>
                    </table>
                </div>
                <div className="flex flex-col items-center w-[14px] bg-[#f0f0f0] py-1">
                    <Svg size="w-[8px] h-[6px]" box="0 0 8 6"><path d="M1 5l3-3 3 3" stroke="#333" /></Svg>
                    <span className="w-[13px] h-[121px] mt-1 bg-[#cdcdcd]" />
                    <span className="flex-1" />
                    <Svg size="w-[8px] h-[6px]" box="0 0 8 6"><path d="M1 1l3 3 3-3" stroke="#333" /></Svg>
                </div>
            </div>
        </section>
    );
}

/* ---------- 3D view ---------- */

// band borders on the far and near edge of the beam
const FAR = [[365, 344], [605, 465], [713, 523], [805, 572], [890, 618], [965, 660], [1040, 703], [1115, 745], [1190, 783], [1268, 824]];
const NEAR = [[267, 388], [515, 505], [632, 564], [712, 607], [800, 654], [880, 698], [960, 742], [1038, 785], [1100, 822], [1175, 866]];
const CELLS = [26, 12, 10, 9, 8, 8, 8, 8, 8];
const mix = (a, b, t) => [a[0] + (b[0] - a[0]) * t, a[1] + (b[1] - a[1]) * t];
const poly = (pts) => pts.map((p) => p.map((n) => Math.round(n * 10) / 10).join(",")).join(" ");
const down = (p) => [p[0], p[1] + 13];

function Beam() {
    return (
        <svg viewBox="262 342 1014 546" className="w-[338px] h-[182px] shrink-0" fill="none">
            {BANDS.map((color, i) => (
                <g key={color}>
                    <polygon points={poly([NEAR[i], NEAR[i + 1], down(NEAR[i + 1]), down(NEAR[i])])} fill={color} stroke="#000" strokeWidth="2" />
                    <polygon points={poly([FAR[i], FAR[i + 1], NEAR[i + 1], NEAR[i]])} fill={color} />
                    {Array.from({ length: CELLS[i] }, (_, k) => {
                        const near = mix(NEAR[i], NEAR[i + 1], k / CELLS[i]);
                        return (
                            <g key={k} stroke="#000">
                                <polyline points={poly([mix(FAR[i], FAR[i + 1], k / CELLS[i]), near])} strokeWidth="2" strokeOpacity=".35" />
                                <polyline points={poly([near, down(near)])} strokeWidth="5" strokeOpacity=".75" />
                            </g>
                        );
                    })}
                </g>
            ))}
            {Array.from({ length: 9 }, (_, k) => (
                <polyline key={k} points={poly(FAR.map((p, i) => mix(p, NEAR[i], (k + 1) / 10)))} stroke="#000" strokeWidth="2" strokeOpacity=".4" />
            ))}
            <polygon points={poly([NEAR[9], FAR[9], down(FAR[9]), down(NEAR[9])])} fill="#00006e" />
            <polyline points={poly(NEAR.map(down))} stroke="#000" strokeWidth="4" />
            <polyline points={poly(FAR)} stroke="#000" strokeWidth="3" />
        </svg>
    );
}

function AxisLabels({ items, top }) {
    return items.map((t, i) => (
        <text key={t} x="681" y={top + i * 13.25} fontSize="6" fill="#222">{t}</text>
    ));
}

function Flag({ x, y, w, children }) {
    return (
        <g>
            <rect x={x} y={y} width={w} height="9" fill="#fff" stroke="#333" strokeWidth=".8" />
            <text x={x + w / 2} y={y + 7} textAnchor="middle" fontSize="6" fontWeight="bold" fill="#111">{children}</text>
        </g>
    );
}

function Diagram() {
    return (
        <div className="flex-1 min-w-0 pt-12 pr-[10px]">
            <h2 className="h-[18px] pl-1 leading-[18px] bg-[#a9a9a9] text-white">Total Shear-Moment Diagram</h2>
            <svg viewBox="658 224 612 244" className="w-full font-['Roboto',sans-serif]" fill="none">
                <g stroke="#8a8a8a" strokeWidth="1">
                    <path d="M728.500 235.500h538v78h-538zM728.500 314.500h538v77h-538zM728.500 466v-72.500h538V466" />
                </g>
                <path d="M728 299.500h538M728 378.500h538M728 457.500h538" stroke="#111" />
                <path d="M1262.500 236v78" stroke="#333" strokeDasharray="13 3" />
                <g strokeWidth="1">
                    <path d="M728 247.500h273L1218 291" stroke="#c81e1e" />
                    <path d="M728 247.500h273L1218 291" stroke="#c81e1e" strokeWidth="2.500" strokeDasharray="1.500 2" />
                    <path d="M728 326C820 340 930 354 1000 362S1110 375 1180 376.500" stroke="#3ddb3d" />
                    <path d="M728 326C820 340 930 354 1000 362S1110 375 1180 376.500" stroke="#2ecc2e" strokeWidth="2.200" strokeDasharray="1.500 2.500" />
                    <path d="M790 457C860 454 960 445 1010 438S1180 416 1266 405.500" stroke="#2a2ab8" strokeWidth=".8" />
                    <path d="M790 457C860 454 960 445 1010 438S1180 416 1266 405.500" stroke="#1c1cb0" strokeWidth="2.200" strokeDasharray="1.500 2.500" />
                </g>
                <path d="M727 246h4v3h-4zM727 325h4v3h-4zM727 456h4v3h-4z" fill="#000" />
                <Flag x={730.5} y={238.500} w={58}>Max: 26. N at 0. mm</Flag>
                <Flag x={1203.5} y={290.500} w={63}>Min: 0.2 N at 258. mm</Flag>
                <Flag x={730.5} y={318} w={76}>Max: 5070. N·mm at 0. mm</Flag>
                <Flag x={1170.5} y={369.500} w={96}>Min: 2.434e-011 N·mm at 260. mm</Flag>
                <Flag x={1187.5} y={397} w={79}>Max: 7.5544 mm at 260. mm</Flag>
                <Flag x={730.5} y={448.500} w={60}>Min: 0. mm at 0. mm</Flag>
                <AxisLabels top={250} items={["26.", "19.55", "13.1", "6.65", "0.2"]} />
                <AxisLabels top={330} items={["5070.", "3802.5", "2535.", "1267.5", "2.4329e-11"]} />
                <AxisLabels top={409} items={["7.5544", "5.6658", "3.7772", "1.8886", "0."]} />
                <g fontSize="7" fontWeight="bold" fill="#111">
                    <text transform="translate(678 307) rotate(-90)">Total Shear Force (N)</text>
                    <text transform="translate(678 391) rotate(-90)">al Bending Moment (N·m</text>
                    <text transform="translate(678 466) rotate(-90)">tal Displacement (mm</text>
                </g>
            </svg>
        </div>
    );
}

function Mark({ children, unit }) {
    return (
        <span className="flex justify-center w-0">
            <span className="relative">
                {children}
                {unit && <span className="absolute left-full top-0 pl-[3px]">{unit}</span>}
            </span>
        </span>
    );
}

function Viewport() {
    return (
        <div className="flex flex-col flex-1 min-h-0 overflow-hidden bg-white text-[#222]">
            <div className="flex">
                <div className="w-[427px] shrink-0 pl-[13px] pt-[12px] text-[10px] leading-[13px]">
                    <p className="font-bold text-[9px] text-black">A: Viga carga puntual</p>
                    <p>Directional Deformation</p>
                    <p>Type: Directional Deformation(Y Axis)</p>
                    <p>Unit: mm</p>
                    <p>Global Coordinate System</p>
                    <p>Time: 1</p>
                    <div className="flex pt-[6px]">
                        <ul className="w-[74px] shrink-0 text-[9px] leading-[14px] whitespace-nowrap">
                            <li className="flex h-[14px] pt-px -mb-[6px] font-bold text-black"><span className="w-5" />0 Max</li>
                            {LEGEND.map(([color, value], i) => (
                                <li key={value} className={clsx("flex items-start h-[14px]", i === 8 && "font-bold text-black")}>
                                    <span className={clsx("w-[13px] h-[15px] border border-black/70 shrink-0", i === 0 && "border-t-2 border-t-black", color)} />
                                    <span className="pl-[7px] pt-[7px]">{value}</span>
                                </li>
                            ))}
                        </ul>
                        <div className="pt-[25px]">
                            <Beam />
                        </div>
                    </div>
                </div>
                <Diagram />
            </div>
            <div className="w-[342px] mx-auto mt-auto mb-[15px] leading-[12px] whitespace-nowrap text-black">
                <div className="flex justify-between">
                    <Mark>0.00</Mark>
                    <Mark>100.00</Mark>
                    <Mark unit="(mm)">200.00</Mark>
                </div>
                <div className="flex h-[8px] border border-black">
                    <span className="flex-1 bg-black" />
                    <span className="flex-1" />
                    <span className="flex-1 bg-black" />
                    <span className="flex-1" />
                </div>
                <div className="flex justify-around pt-[2px]">
                    <Mark>50.00</Mark>
                    <Mark>150.00</Mark>
                </div>
            </div>
        </div>
    );
}

/* ---------- bottom panels ---------- */

function GraphPanel() {
    return (
        <section className="flex flex-col w-[467px] shrink-0 bg-[#efeef3]">
            <PanelHeader title="Graph" />
            <div className="flex items-center h-[22px] shrink-0 pl-[7px] text-[#333]">
                <Grip />
                <span className="w-[58px] pl-2 shrink-0 text-[10px]">Animation</span>
                <Tool label="First frame" width="w-[22px]"><Svg><path d="M2 1v12" stroke="#aaa" strokeWidth="2" /><path d="M12 2v10L5 7z" fill="#c4c4c4" stroke="none" /></Svg></Tool>
                <Tool label="Play" width="w-[14px]"><Svg><path d="M3 2v11l8-5.500z" fill="#cf9a10" stroke="none" /></Svg></Tool>
                <Tool label="Stop" active width="w-[18px] ml-[2px]"><Svg><path d="M2 2h10v10H2z" fill="#cf9a10" stroke="#5c450b" strokeWidth="1" /></Svg></Tool>
                <Tool label="Last frame" width="w-[19px]"><Svg><path d="M12 1v12" stroke="#aaa" strokeWidth="2" /><path d="M2 2v10l7-5z" fill="#c4c4c4" stroke="none" /></Svg></Tool>
                <span className="w-[2px] shrink-0" />
                <Sep />
                <Tool label="Distributed animation" active width="w-[18px] ml-[2px]"><Svg><path d="M2 1h3v9H2zM6 1h3v9H6zM10 1h3v9h-3z" fill="#d9f7d9" stroke="#2db52d" strokeWidth=".9" /><path d="M0 12.500h14" stroke="#d22" strokeDasharray="3 1" /></Svg></Tool>
                <Tool label="Result sets"><Svg><path d="M2 1h3v9H2zM6 1h3v9H6zM10 1h3v9h-3z" fill="#cfe4fa" stroke="#2a78c4" strokeWidth=".9" /><path d="M0 12.500h14" stroke="#d22" strokeDasharray="3 1" /></Svg></Tool>
                <span className="w-[2px] shrink-0" />
                <Sep />
                <Picker label="Frames" options={["20 Frames"]} className="w-[84px] h-[19px] ml-[2px] text-[10px]" />
                <Picker label="Duration" options={["2 Sec (Auto)"]} className="w-[84px] h-[19px] text-[10px]" />
                <span className="w-[5px] shrink-0" />
                <Sep />
                <Tool label="Export video"><Svg><path d="M1 2h11v9H1z" fill="#fff" stroke="#444" /><path d="M1 3h11" stroke="#444" strokeWidth="2.500" /><path d="M3 8l2-2 3 1" stroke="#d22" /><path d="M7 7h6v6H7z" fill="#dceafa" stroke="#3b7fc9" /></Svg></Tool>
                <span className="w-[2px] shrink-0" />
                <Sep />
                <Tool label="Zoom graph" width="w-[22px]"><Mag mark="M5 3.500v5l3-2.500z" /></Tool>
                <Tool label="Colours" width="w-[17px]">
                    <Svg size="w-[14px] h-[13px]"><path d="M0 2.500h14" stroke="#e02020" strokeWidth="3" strokeDasharray="2 1" /><path d="M0 7h14" stroke="#22b322" strokeWidth="3" strokeDasharray="2 1" /><path d="M0 11.500h14" stroke="#2222d8" strokeWidth="3" strokeDasharray="2 1" /></Svg>
                </Tool>
                <Tool label="Probe" width="w-5"><Svg><path d="M1 9l3-2V5l5-3 4 3-3 4H7l-2 3H2z" fill="#b3b3b3" stroke="none" /></Svg></Tool>
                <button aria-label="More options" className="flex flex-col items-center ml-auto pr-[5px] gap-[2px]">
                    <Svg size="w-[6px] h-[8px]" box="0 0 6 8"><path d="M1 1l2 2 2-2M1 4l2 2 2-2" stroke="#444" /></Svg>
                    <Arrow className="text-black" />
                </button>
            </div>
            <div className="flex flex-1 min-h-0 bg-white">
                <span className="w-9 shrink-0 pt-[6px] flex items-start justify-end font-bold text-[11px] leading-[20px] text-black">
                    <span className="[writing-mode:vertical-rl] rotate-180">[mm]</span>
                </span>
                <div className="flex-1 pr-[21px] pt-[20px]">
                    <svg viewBox="0 0 410 14" preserveAspectRatio="none" className="w-full h-[14px]" shapeRendering="crispEdges">
                        <path d="M6.500 1.500H409.500v4H6.500z" fill="#fff" stroke="#aaa" />
                        <path d="M7 6v6M47.500 6v6M87.500 6v6M127.500 6v6M167.500 6v6M208.500 6v6M248.500 6v6M288.500 6v6M328.500 6v6M368.500 6v6M409.500 6v6" stroke="#aaa" />
                        <path d="M1 1h5v5H1z" fill="#aaa" />
                        <path d="M6 0h2v5H6z" fill="#000080" />
                        <path d="M6 4h2v3H6z" fill="#c00" />
                    </svg>
                    <p className="ml-[6px] pt-[7px] text-center font-bold text-[10px] leading-[16px] text-black">[s]</p>
                    <div className="ml-[6px] mt-[2px] h-[13px] border border-[#b5b5b5]" />
                </div>
            </div>
            <div className="flex h-4 shrink-0 text-[#444] text-[10px]">
                <button className="w-[54px] text-[9px]">Messages</button>
                <button className="w-9 bg-white text-[#0a6fc2] border-r border-[#d0d0d6]">Graph</button>
            </div>
        </section>
    );
}

function TabularPanel() {
    const columns = [
        ["Minimum [mm]", "text-[#c62828]", "w-[87px]"],
        ["Maximum [mm]", "text-[#1f9a2c]", "w-[86px]"],
        ["Average [mm]", "text-[#1a3fc4]", "w-[80px]"],
    ];
    return (
        <section className="flex flex-col flex-1 min-w-0 bg-[#efeef3]">
            <PanelHeader title="Tabular Data" edge="pr-px" />
            <div className="flex-1 bg-[#a0a0a0]">
                <table className="table-fixed border-collapse w-[304px] bg-[#f0f0f0] text-[#222]">
                    <thead>
                        <tr className="h-[15px]">
                            <th className="w-[11px] border border-[#c8c8c8] p-0" />
                            <th className="w-10 border border-[#c8c8c8] p-0 font-normal whitespace-nowrap">Time [s]</th>
                            {columns.map(([name, color, width]) => (
                                <th key={name} className={clsx("border border-[#c8c8c8] p-0 pl-[3px] font-normal", color, width)}>
                                    <Tick label={name} checked className="gap-[3px]" />
                                </th>
                            ))}
                        </tr>
                    </thead>
                    <tbody>
                        <tr className="h-[13px]">
                            <th className="border border-[#c8c8c8] p-0 font-normal">1</th>
                            {["1.", "-7.5544", "0.", "-2.9729"].map((v) => (
                                <td key={v} className="border border-[#c8c8c8] p-0 pl-[2px] leading-[12px]">{v}</td>
                            ))}
                        </tr>
                    </tbody>
                </table>
            </div>
        </section>
    );
}

export default function App() {
    return (
        <div className="flex flex-col h-screen pt-[25px] bg-black font-['Open_Sans','Noto_Sans',sans-serif] text-[9px] leading-[12px]">
            <TitleBar />
            <Ribbon />
            <main className="flex flex-1 min-h-0 bg-[#efeef3]">
                <aside className="flex flex-col w-[229px] shrink-0">
                    <Outline />
                    <Details />
                </aside>
                <div className="flex flex-col flex-1 min-w-0 ml-[2px]">
                    <ViewToolbar />
                    <Viewport />
                    <div className="flex h-[138px] pt-[2px] gap-[2px] shrink-0">
                        <GraphPanel />
                        <TabularPanel />
                    </div>
                </div>
            </main>
            <footer className="h-[28px] shrink-0 bg-black border-t-2 border-[#1a75bb]" />
        </div>
    );
}
